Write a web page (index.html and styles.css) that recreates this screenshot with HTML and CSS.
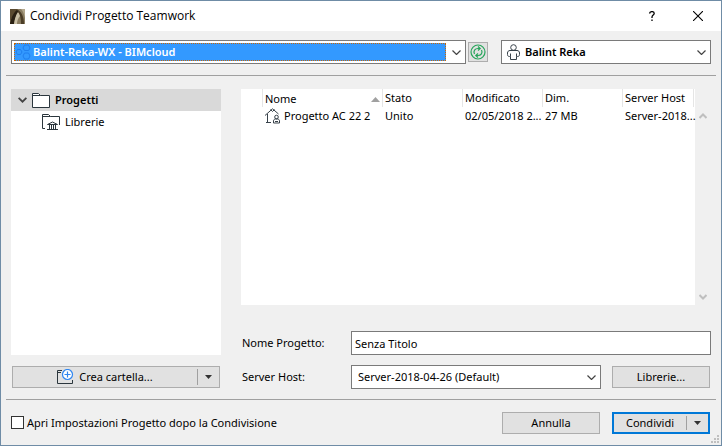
FILE: index.html
```html
<!doctype html>
<html lang="it">

<head>
  <meta charset="UTF-8">
  <meta name="viewport" content="width=device-width, initial-scale=1.0">
  <title>Condividi Progetto Teamwork</title>
  <link rel="stylesheet" href="styles.css">
</head>

<body>
  <form class="dialog">
    <header class="titlebar">
      <svg class="titlebar__logo" width="15" height="15" viewBox="0 0 15 15">
        <rect width="15" height="15" fill="#8a7d62" />
        <path d="M0 0h8L0 12z" fill="#5a4a30" />
        <path d="M0 14C2 7 4 3 7 1l2 1C6 6 5 10 4 15H0z" fill="#2b2113" />
        <path d="M4 15C5 9 6 6 8 3c1 1 2 2 2 4-2 2-3 5-3 8z" fill="#c9bfa5" />
        <path d="M8 1c4 2 6 8 6 14h-3C11 9 10 5 8 3z" fill="#4b3d27" />
        <path d="M11 0h4v9C14 5 13 2 11 0z" fill="#b3a78c" />
      </svg>
      <h1 class="titlebar__title">Condividi Progetto Teamwork</h1>
      <button class="titlebar__button" type="button" aria-label="Aiuto">
        <svg width="10" height="10" viewBox="0 0 10 10" fill="none" stroke="#000" stroke-width="1.300">
          <path d="M2.500 2.500C2.800 1.200 3.800.6 5 .6c1.400 0 2.200.7 2.200 1.900C7.200 4 5 4.200 5 6v1M5 8.500V10" />
        </svg>
      </button>
      <button class="titlebar__button" type="button" aria-label="Chiudi">
        <svg width="10" height="10" viewBox="0 0 10 10" fill="none" stroke="#000" stroke-width="1.1">
          <path d="M0 0l10 10M10 0L0 10" />
        </svg>
      </button>
    </header>

    <div class="toolbar">
      <div class="combo combo--server">
        <svg class="combo__icon" width="15" height="16" viewBox="0 0 15 16" fill="none" stroke="#1f7fee">
          <path d="M1.500 5.500h3l1.500 2.500-1.500 2.500h-3L0 8zM8.500 1h4L14 4l-1.500 2.500h-4L7 4zM8.500 9h4l1.500 3-1.500 3h-4L7 12z" />
        </svg>
        <select class="combo__select combo__select--active" aria-label="Server">
          <option>Balint-Reka-WX - BIMcloud</option>
        </select>
        <svg class="combo__arrow" width="9" height="5" viewBox="0 0 9 5"><path d="M.5.5l4 4 4-4" /></svg>
      </div>
      <button class="refresh" type="button" aria-label="Aggiorna">
        <svg width="16" height="16" viewBox="0 0 16 16" fill="none" stroke="#27a55b" stroke-width="1.200">
          <circle cx="8" cy="8" r="7" />
          <path d="M4.500 10C3 7 5 4.500 8 4.500h2M8 2.500l2.200 2L8 6.500M11.500 6C13 9 11 11.500 8 11.500H6M8 9.500l-2.200 2 2.200 2" />
        </svg>
      </button>
      <div class="combo combo--user">
        <svg class="combo__icon" width="13" height="17" viewBox="0 0 13 17" fill="none" stroke="#38424a">
          <circle cx="6.500" cy="3.500" r="2.800" />
          <path d="M3.500 15.500v-3h-1c-1.500 0-2-.8-2-2V9c0-1.500 1-2.500 2.500-2.500h7c1.500 0 2.500 1 2.500 2.500v1.500c0 1.200-.5 2-2 2h-1v3zM3.500 9.500v3M9.500 9.500v3" />
        </svg>
        <select class="combo__select" aria-label="Utente">
          <option>Balint Reka</option>
        </select>
        <svg class="combo__arrow" width="9" height="5" viewBox="0 0 9 5"><path d="M.5.5l4 4 4-4" /></svg>
      </div>
    </div>

    <main class="content">
      <section class="sidebar">
        <ul class="tree">
          <li class="tree__item tree__item--selected">
            <svg width="9" height="6" viewBox="0 0 9 6" fill="none" stroke="#444" stroke-width="1.800">
              <path d="M.6.8l3.900 3.900L8.400.8" />
            </svg>
            <svg width="18" height="15" viewBox="0 0 18 15" fill="#fff" stroke="#2b363d">
              <path d="M.5 14.500V.5h6l2 2h9v12z" />
              <path d="M.5 2.500h8" />
            </svg>
            <span>Progetti</span>
          </li>
          <li class="tree__item tree__item--child">
            <svg width="18" height="17" viewBox="0 0 18 17" fill="none" stroke="#2b363d">
              <path d="M3 14.500H.5V.5h6l2 2h9V11M.5 2.500h8" />
              <path d="M5.500 10.500l5-2.500 5 2.500zM7.500 11v4M9.500 11v4M11.500 11v4M13.500 11v4M5 15.500h11" />
            </svg>
            <span>Librerie</span>
          </li>
        </ul>
        <div class="split">
          <button class="split__main" type="button">
            <svg width="17" height="16" viewBox="0 0 17 16" fill="none" stroke="#2b363d">
              <path d="M5 1.500H.5v13h15V11M.5 3.500H4" />
              <circle cx="10.500" cy="5.500" r="5" fill="#fff" stroke="#2f86f0" stroke-width="1.200" />
              <path d="M7.500 5.500h6M10.500 2.500v6" stroke="#2f86f0" stroke-width="1.200" />
            </svg>
            Crea cartella...
          </button>
          <button class="split__toggle" type="button" aria-label="Altre opzioni">
            <svg width="7" height="4" viewBox="0 0 7 4"><path d="M0 0h7L3.500 4z" fill="#333" /></svg>
          </button>
        </div>
      </section>

      <section class="details">
        <div class="list">
          <div class="list__body">
            <table class="list__table">
              <colgroup>
                <col class="list__col-icon">
                <col class="list__col-name">
                <col class="list__col">
                <col class="list__col">
                <col class="list__col">
                <col>
              </colgroup>
              <thead>
                <tr>
                  <td></td>
                  <th class="list__sorted">
                    <span>Nome</span>
                    <svg width="9" height="5" viewBox="0 0 9 5"><path d="M4.500 0L9 5H0z" fill="#a0a0a0" /></svg>
                  </th>
                  <th>Stato</th>
                  <th>Modificato</th>
                  <th>Dim.</th>
                  <th>Server Host</th>
                </tr>
              </thead>
              <tbody>
                <tr>
                  <td></td>
                  <td>
                    <div class="list__name">
                      <svg width="16" height="16" viewBox="0 0 16 16" fill="none" stroke="#38424a">
                        <path d="M0 7.500L7.500.8 13.500 6M5.500 1.500l2 2 2-2M2.500 6v9M1 14.500h5" />
                        <circle cx="11.500" cy="9" r="1.800" />
                        <path d="M8.500 15v-2c0-1.200.8-2 2-2h2c1.200 0 2 .8 2 2v2zM10 13.500h3" />
                      </svg>
                      <span>Progetto AC 22 2</span>
                    </div>
                  </td>
                  <td>Unito</td>
                  <td>02/05/2018 2...</td>
                  <td>27 MB</td>
                  <td>Server-2018...</td>
                </tr>
              </tbody>
            </table>
          </div>
          <div class="list__scroll">
            <svg width="8" height="6" viewBox="0 0 8 6"><path d="M.5 5L4 1.500 7.500 5" /></svg>
            <svg width="8" height="6" viewBox="0 0 8 6"><path d="M.5 1L4 4.500 7.500 1" /></svg>
          </div>
        </div>

        <div class="field">
          <label class="field__label" for="project-name">Nome Progetto:</label>
          <input class="field__input" id="project-name" type="text" value="Senza Titolo">
        </div>
        <div class="field">
          <label class="field__label" for="server-host">Server Host:</label>
          <div class="combo combo--host">
            <select class="combo__select" id="server-host">
              <option>Server-2018-04-26 (Default)</option>
            </select>
            <svg class="combo__arrow" width="9" height="5" viewBox="0 0 9 5"><path d="M.5.5l4 4 4-4" /></svg>
          </div>
          <button class="button" type="button">Librerie...</button>
        </div>
      </section>
    </main>

    <footer class="footer">
      <input class="footer__checkbox" id="open-settings" type="checkbox">
      <label class="footer__label" for="open-settings">Apri Impostazioni Progetto dopo la Condivisione</label>
      <button class="button" type="button">Annulla</button>
      <div class="split split--primary">
        <button class="split__main" type="submit">Condividi</button>
        <button class="split__toggle" type="button" aria-label="Altre opzioni">
          <svg width="7" height="4" viewBox="0 0 7 4"><path d="M0 0h7L3.500 4z" fill="#333" /></svg>
        </button>
      </div>
    </footer>
    <svg class="dialog__grip" width="8" height="8" viewBox="0 0 8 8" fill="#bfbfbf">
      <path d="M6 0h2v2H6zM3 3h2v2H3zM6 3h2v2H6zM0 6h2v2H0zM3 6h2v2H3zM6 6h2v2H6z" />
    </svg>
  </form>
</body>

</html>
```
FILE: styles.css
```css
:root {
  --font-stack: "Noto Sans", "Open Sans", sans-serif;
  --title-font-stack: "Open Sans", "Noto Sans", sans-serif;
  --dialog-color: #f0f0f0;
  --edge-color: #6f8ca6;
  --field-border: #7a7a7a;
  --button-color: #e1e1e1;
  --button-border: #adadad;
  --accent-color: #0078d7;
}

/* Box sizing rules */
*,
*::before,
*::after {
  box-sizing: border-box;
}

body,
h1,
ul {
  margin: 0;
}

body {
  color: #000;
  font-family: var(--font-stack);
  font-size: 11px;
  line-height: 16px;
}

svg {
  display: block;
  flex: none;
}

input,
button,
select {
  margin: 0;
  font: inherit;
  color: inherit;
}

.dialog {
  position: relative;
  display: flex;
  flex-direction: column;
  min-height: 100vh;
  border: 1px solid var(--edge-color);
  background-color: var(--dialog-color);
}

.dialog__grip {
  position: absolute;
  right: 2px;
  bottom: 2px;
}

/* Title bar */
.titlebar {
  display: flex;
  align-items: center;
  height: 30px;
  padding-left: 9px;
  background-color: #fff;
}

.titlebar__logo {
  margin-right: 5px;
}

.titlebar__title {
  flex: 1;
  font-family: var(--title-font-stack);
  font-size: 12px;
  font-weight: normal;
}

.titlebar__button {
  display: flex;
  align-items: center;
  justify-content: center;
  width: 46px;
  height: 30px;
  padding: 0;
  border: none;
  background-color: transparent;
}

/* Server and user pickers */
.toolbar {
  display: flex;
  align-items: center;
  margin: 0 5px;
  padding: 9px 5px 11px;
  border-bottom: 1px solid #a0a0a0;
}

.combo {
  position: relative;
  display: flex;
  align-items: center;
  height: 24px;
  padding: 2px 4px 2px 2px;
  border: 1px solid var(--field-border);
  background-color: #fff;
}

.combo--server {
  flex: 1;
}

.combo--user {
  flex: 0 0 210px;
  margin-left: 13px;
}

.combo--host {
  flex: 1;
}

.combo__icon {
  position: absolute;
  left: 5px;
}

.combo__select {
  flex: 1;
  min-width: 0;
  height: 18px;
  padding: 0 4px;
  border: none;
  border-radius: 0;
  background-color: transparent;
  appearance: none;
  line-height: 16px;
}

.combo--server .combo__icon {
  left: 4px;
}

.combo--server .combo__select,
.combo--user .combo__select {
  padding-left: 21px;
  font-weight: 600;
}

.combo--server .combo__select {
  padding-left: 18px;
  margin-right: 6px;
}

.combo__select--active {
  border: 1px dotted #cc6600;
  background-color: #3399ff;
  color: #fff;
}

.combo__arrow {
  fill: none;
  stroke: #444;
  stroke-width: 1.2px;
}

.refresh {
  display: flex;
  align-items: center;
  justify-content: center;
  width: 20px;
  height: 20px;
  margin-left: 2px;
  padding: 0;
  border: 1px solid var(--button-border);
  background-color: var(--button-color);
}

/* Content */
.content {
  flex: 1;
  display: flex;
  gap: 20px;
  margin: 0 5px;
  padding: 13px 5px 11px;
  border-bottom: 1px solid #a0a0a0;
}

.sidebar {
  flex: 0 0 210px;
  display: flex;
  flex-direction: column;
}

.tree {
  flex: 1;
  margin-bottom: 11px;
  padding: 0;
  background-color: #fff;
  list-style: none;
}

.tree__item {
  display: flex;
  align-items: center;
  gap: 5px;
  height: 22px;
  padding-left: 7px;
}

.tree__item--selected {
  background-color: #d9d9d9;
  font-weight: 600;
}

.tree__item--child {
  padding-left: 31px;
}

/* Buttons */
.button {
  width: 98px;
  height: 22px;
  padding: 0;
  border: 1px solid var(--button-border);
  background-color: var(--button-color);
}

.split {
  display: flex;
  height: 22px;
  margin: 0 1px;
  border: 1px solid var(--button-border);
  background-color: var(--button-color);
}

.split__main {
  flex: 1;
  display: flex;
  align-items: center;
  justify-content: center;
  gap: 5px;
  padding: 0;
  border: none;
  background-color: transparent;
}

.split__toggle {
  display: flex;
  align-items: center;
  justify-content: center;
  width: 22px;
  margin: 2px 0;
  padding: 0;
  border: none;
  border-left: 1px solid #a0a0a0;
  background-color: transparent;
}

/* Project list */
.details {
  flex: 1;
  min-width: 0;
  display: flex;
  flex-direction: column;
}

.list {
  flex: 1;
  display: flex;
  margin-bottom: 15px;
}

.list__body {
  flex: 1;
  min-width: 0;
  padding-right: 1px;
  background-color: #fff;
}

.list__table {
  width: 100%;
  border-collapse: separate;
  border-spacing: 0;
  table-layout: fixed;
}

.list__col-icon {
  width: 21px;
}

.list__col-name {
  width: 120px;
}

.list__col {
  width: 80px;
}

.list__table th,
.list__table td {
  height: 18px;
  padding: 0 0 0 3px;
  font-weight: normal;
  text-align: left;
  white-space: nowrap;
}

.list__table th {
  border-left: 1px solid #e5e5e5;
  padding-left: 2px;
}

.list__table th:last-child {
  border-right: 1px solid #e5e5e5;
}

.list__sorted span,
.list__sorted svg {
  display: inline-block;
  vertical-align: middle;
}

.list__sorted svg {
  float: right;
  margin: 8px 2px 0 0;
}

.list__name {
  display: flex;
  align-items: center;
  gap: 3px;
}

.list__scroll {
  display: flex;
  flex-direction: column;
  justify-content: space-between;
  align-items: center;
  width: 16px;
  padding: 24px 0 5px;
}

.list__scroll path {
  fill: none;
  stroke: #bfbfbf;
  stroke-width: 2px;
}

/* Fields under the list */
.field {
  display: flex;
  align-items: center;
  gap: 11px;
  height: 22px;
  margin-top: 12px;
}

.field .button {
  margin-right: 1px;
}

.field__label {
  width: 99px;
  padding-left: 1px;
}

.field__input {
  flex: 1;
  min-width: 0;
  height: 24px;
  padding: 0 3px;
  border: 1px solid var(--field-border);
  border-radius: 0;
  background-color: #fff;
}

/* Footer */
.footer {
  display: flex;
  align-items: center;
  height: 45px;
  padding: 0 11px 0 10px;
}

.footer__checkbox {
  width: 13px;
  height: 13px;
  border: 1px solid #333;
  background-color: #fff;
  appearance: none;
}

.footer__checkbox:checked {
  box-shadow: inset 0 0 0 2px #fff;
  background-color: #333;
}

.footer__label {
  flex: 1;
  padding-left: 3px;
}

.split--primary {
  width: 98px;
  margin: 0 0 0 12px;
  border: 2px solid var(--accent-color);
}
```
